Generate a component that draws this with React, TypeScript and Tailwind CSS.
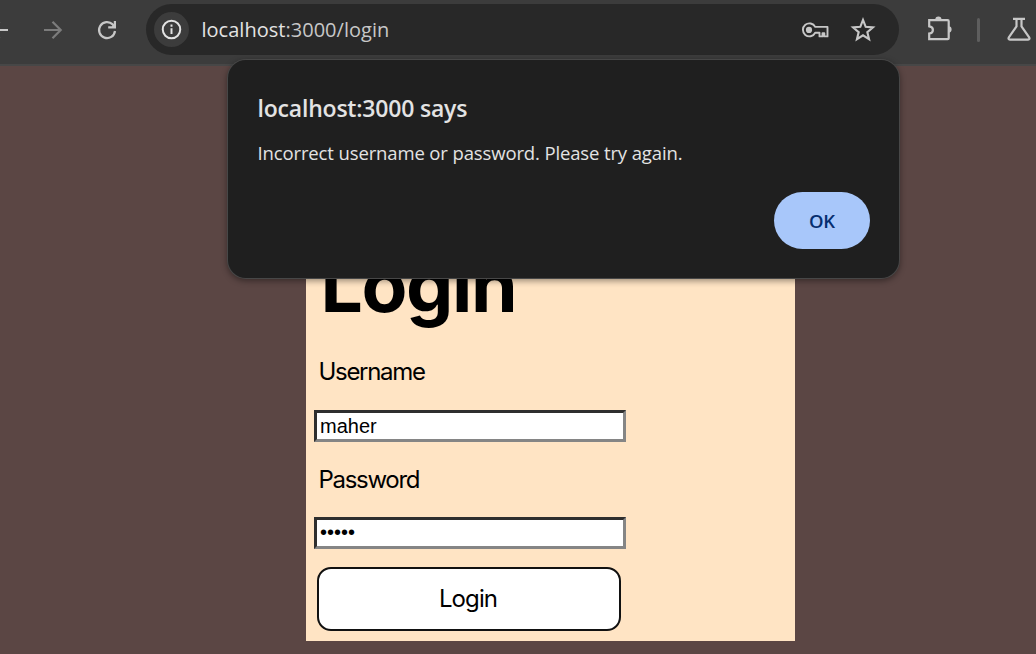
import type { ReactNode } from "react";

function Glyph({ size, className, children }: { size: number; className?: string; children: ReactNode }) {
  return (
    <svg width={size} height={size} viewBox="0 0 24 24" fill="none" className={"shrink-0 " + (className ?? "")}>
      {children}
    </svg>
  );
}

function Toolbar() {
  return (
    <header className="flex h-[66px] shrink-0 items-start border-b-2 border-[#474747] bg-[#3c3c3c] pt-1">
      <div className="flex h-[51px] w-[146px] shrink-0 items-center">
        <Glyph size={24} className="-ml-[13px] text-[#c7c7c7]">
          <path d="M21 12H4M12.5 3.8 4.3 12l8.2 8.2" stroke="currentColor" strokeWidth="2.2" />
        </Glyph>
        <Glyph size={24} className="ml-[30px] text-[#7c7c7c]">
          <path d="M3 12h17M11.5 3.8l8.2 8.2-8.2 8.2" stroke="currentColor" strokeWidth="2.2" />
        </Glyph>
        <Glyph size={24} className="ml-[30px] text-[#c7c7c7]">
          <path d="M20 13a8 8 0 1 1-2.3-6.6l2 2.2" stroke="currentColor" strokeWidth="2.2" />
          <path d="M21 3v7.5h-7.8V8.2h3.6L18.8 6.2V3z" fill="currentColor" />
        </Glyph>
      </div>
      <div className="flex h-[51px] w-[753px] shrink-0 items-center rounded-full bg-[#282828] pl-2">
        <div className="flex size-[35px] shrink-0 items-center justify-center rounded-full bg-[#3c3c3c] text-[#e3e3e3]">
          <Glyph size={25}>
            <circle cx="12" cy="12" r="8.4" stroke="currentColor" strokeWidth="1.9" />
            <path d="M12 10.8v5.6M12 7.3v2" stroke="currentColor" strokeWidth="1.9" />
          </Glyph>
        </div>
        <div className="ml-[12.5px] flex-1 whitespace-nowrap font-['Open_Sans','Noto_Sans',sans-serif] text-[20px] tracking-[0.02px] text-[#c7c7c7]">
          <span className="text-[#e3e3e3]">localhost</span>:3000/login
        </div>
        <svg width="28" height="18" viewBox="0 0 28 18" fill="none" className="mr-[20px] shrink-0 text-[#c7c7c7]">
          <path d="M14.2 5.9A6.5 6.5 0 1 0 14.2 11.8h4.3v3.6h3v-3.1h1.8v3.1h3.2V5.9z" stroke="currentColor" strokeWidth="1.9" strokeLinejoin="round" />
          <circle cx="8" cy="8.9" r="3.1" fill="currentColor" />
        </svg>
        <Glyph size={28} className="mr-[22px] text-[#c7c7c7]">
          <path d="m12 3.4 2.3 5.9 6.2.5-4.8 4 1.5 6.1-5.2-3.3-5.2 3.3 1.5-6.1-4.8-4 6.2-.5z" stroke="currentColor" strokeWidth="1.8" />
        </Glyph>
      </div>
      <div className="flex h-[51px] items-center pl-[27px]">
        <svg width="28" height="28" viewBox="0 0 28 28" fill="none" className="-mt-[3px] shrink-0 text-[#c7c7c7]">
          <path d="M3.2 6.2h18.5a1 1 0 0 1 1 1v17a1 1 0 0 1-1 1H3.2v-5.7c2.5-.3 3.7-1.8 3.7-3.6s-1.2-3.3-3.7-3.6z" stroke="currentColor" strokeWidth="2.2" />
          <path d="M9.3 5.6a3.1 3.1 0 0 1 6.2 0zM22.5 12.3a3.1 3.1 0 0 1 0 6.2z" fill="currentColor" />
        </svg>
        <div className="ml-[23px] h-[24px] w-[3px] shrink-0 rounded-full bg-[#5e5e5e]" />
        <svg width="24" height="26" viewBox="0 0 24 26" fill="none" className="-mt-px ml-[27px] shrink-0 text-[#c7c7c7]">
          <path d="M6 2.9h12M9.5 3v7.4L2 21.2c-.9 1.3-.5 2.5.9 2.5h18.2c1.4 0 1.8-1.2.9-2.5L14.5 10.4V3" stroke="currentColor" strokeWidth="2.2" />
        </svg>
      </div>
    </header>
  );
}

function AlertDialog() {
  return (
    <div
      role="alertdialog"
      className="absolute left-[228px] top-[60px] flex h-[218px] w-[671px] flex-col rounded-[18px] bg-[#1f1f1f] pl-[29.5px] pr-[29px] font-['Open_Sans','Noto_Sans',sans-serif] shadow-[0_0_0_1px_#474747,0_2px_6px_1px_rgba(0,0,0,0.4)]"
    >
      <h2 className="mt-[31px] whitespace-nowrap text-[23px] font-semibold leading-[34px] tracking-[-0.2px] text-[#e3e3e3]">
        localhost:3000 says
      </h2>
      <p className="mt-[14px] whitespace-nowrap text-[18.5px] leading-[28px] tracking-[-0.13px] text-[#e3e3e3]">
        Incorrect username or password. Please try again.
      </p>
      <button className="mt-[25px] h-[57px] w-[96px] self-end rounded-[28.5px] bg-[#a8c7fa] text-[18.5px] font-semibold tracking-[-0.3px] text-[#062e6f]">
        OK
      </button>
    </div>
  );
}

function LoginCard() {
  return (
    <form className="mt-[124px] flex h-[451px] w-[489px] flex-col bg-[#ffe4c4] pl-2 pt-[57px] font-[Inter,sans-serif] text-black">
      <h1 className="ml-[6.5px] text-[75px] font-bold leading-none tracking-[-1.4px]">Login</h1>
      <label className="ml-[4.5px] mt-[34px] text-[24px] leading-8 tracking-[-1.3px]">Username</label>
      <input
        type="text"
        defaultValue="maher"
        className="mt-[22px] h-8 w-[312px] border-[3px] border-b-[#858585] border-l-[#2e2e2e] border-r-[#858585] border-t-[#2e2e2e] bg-white px-[3px] font-['Liberation_Sans',sans-serif] text-[20px] outline-none"
      />
      <label className="ml-[4.5px] mt-[22px] text-[24px] leading-8 tracking-[-1.3px]">Password</label>
      <input
        type="password"
        defaultValue="12345"
        className="mt-[21px] h-8 w-[312px] border-[3px] border-b-[#858585] border-l-[#2e2e2e] border-r-[#858585] border-t-[#2e2e2e] bg-white px-[3px] pb-px font-['Liberation_Sans',sans-serif] text-[20px] outline-none"
      />
      <button
        type="button"
        className="ml-[3px] mt-[18px] h-[64px] w-[304px] rounded-[14px] border-2 border-[#111] bg-white pr-[2px] text-[24px] tracking-[-0.9px]"
      >
        Login
      </button>
    </form>
  );
}

export default function App() {
  return (
    <div className="relative flex h-[654px] w-[1036px] flex-col overflow-hidden bg-[#5b4644]">
      <Toolbar />
      <main className="flex pl-[306px]">
        <LoginCard />
      </main>
      <AlertDialog />
    </div>
  );
}
